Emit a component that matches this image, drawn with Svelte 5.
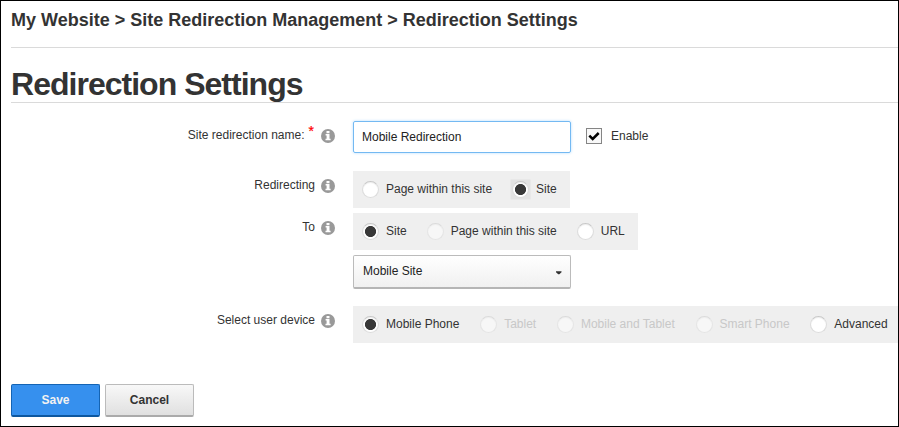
<script>
  const rows = {
    from: [
      { label: 'Page within this site' },
      { label: 'Site', checked: true, focused: true }
    ],
    to: [
      { label: 'Site', checked: true },
      { label: 'Page within this site', faded: true },
      { label: 'URL' }
    ],
    device: [
      { label: 'Mobile Phone', checked: true },
      { label: 'Tablet', disabled: true },
      { label: 'Mobile and Tablet', disabled: true },
      { label: 'Smart Phone', disabled: true },
      { label: 'Advanced' }
    ]
  };
</script>

{#snippet info()}
  <svg class="info" width="14" height="14" viewBox="0 0 14 14" aria-hidden="true">
    <circle cx="7" cy="7" r="7" fill="#999" />
    <path d="M5.5 2h3v2.2h-3zM4.6 5h3.9v4.8h1.1v1.5H4.5V9.8h1.1V6.5h-1z" fill="#fff" />
  </svg>
{/snippet}

{#snippet options(list)}
  <div class="options">
    {#each list as item}
      <span class="option" class:disabled={item.disabled}>
        <span class="holder" class:focused={item.focused}>
          <span class="radio" class:checked={item.checked} class:faded={item.faded || item.disabled}></span>
        </span>
        <span class="text">{item.label}</span>
      </span>
    {/each}
  </div>
{/snippet}

<main>
  <div class="crumbs">My Website &gt; Site Redirection Management &gt; Redirection Settings</div>
  <h1>Redirection Settings</h1>

  <div class="row name">
    <div class="label">Site redirection name: <span class="star">*</span>{@render info()}</div>
    <div class="field">Mobile Redirection</div>
    <span class="check">
      <svg width="16" height="16" viewBox="0 0 16 16" aria-hidden="true">
        <path d="M3.3 7.6L6.7 11L12.7 5" fill="none" stroke="#000" stroke-width="2.5" />
      </svg>
    </span>
    <span class="enable">Enable</span>
  </div>

  <div class="row from">
    <div class="label">Redirecting{@render info()}</div>
    {@render options(rows.from)}
  </div>

  <div class="row to">
    <div class="label">To{@render info()}</div>
    <div>
      {@render options(rows.to)}
      <div class="select">
        <span>Mobile Site</span>
        <svg width="6" height="4" viewBox="0 0 6 4" aria-hidden="true"><path d="M0 .3h5.5v1L3.4 3.3H2.2L0 1.3z" fill="#333" /></svg>
      </div>
    </div>
  </div>

  <div class="row device">
    <div class="label">Select user device{@render info()}</div>
    {@render options(rows.device)}
  </div>

  <div class="actions">
    <button class="save">Save</button>
    <button class="cancel">Cancel</button>
  </div>
</main>

<style>
  :global(body) { margin: 0; background: #fff; }
  main {
    box-sizing: border-box;
    width: 899px;
    height: 427px;
    border: 1px solid #000;
    padding-left: 10px;
    overflow: hidden;
    font: 12px/16px "Liberation Sans", Arial, sans-serif;
    color: #333;
    white-space: nowrap;
  }
  .crumbs {
    box-sizing: border-box;
    height: 47px;
    border-bottom: 1px solid #dadada;
    font-size: 18px;
    line-height: 38px;
    font-weight: bold;
  }
  h1 {
    box-sizing: border-box;
    margin: 0;
    height: 55px;
    border-bottom: 1px solid #dadada;
    font-size: 32px;
    line-height: 36px;
    padding-top: 18px;
    letter-spacing: -0.98px;
  }
  .row { display: flex; align-items: flex-start; }
  .row > :global(*) { flex-shrink: 0; }
  .name { margin-top: 18px; height: 50px; }
  .from { height: 42px; }
  .to { height: 93px; }
  .device { height: 78px; }
  .label {
    display: flex;
    justify-content: flex-end;
    width: 324px;
    margin-right: 18px;
    padding-top: 6px;
  }
  .info { margin: 2px 0 0 6px; }
  .star { color: #f00; margin: -4px 1px 0 4px; font-size: 14px; -webkit-text-stroke: 0.2px #f00; }
  .field {
    box-sizing: border-box;
    width: 218px;
    height: 32px;
    border: 1px solid #74b9f2;
    border-radius: 2px;
    padding: 8px;
    line-height: 14px;
    box-shadow: 0 0 3px #b4dcff;
    color: #222;
  }
  .check {
    box-sizing: border-box;
    width: 16px;
    height: 16px;
    margin: 7px 9px 0 15px;
    border: 1px solid #858585;
    background: #f8f8f8;
    display: flex;
  }
  .check svg { margin: -1px; }
  .enable { margin-top: 7px; }
  .options {
    box-sizing: border-box;
    display: inline-flex;
    align-items: center;
    gap: 20px;
    height: 37px;
    padding: 0 13px 0 9px;
    background: #efefef;
    vertical-align: top;
  }
  .device .options { gap: 20.75px; }
  .option { display: flex; align-items: center; gap: 7px; }
  .option .text { position: relative; top: -1px; }
  .disabled .text { color: #c8c8c8; }
  .holder { display: flex; }
  .focused { background: #e2e2e2; box-shadow: 0 0 0 1.5px #e2e2e2; }
  .radio {
    box-sizing: border-box;
    width: 17px;
    height: 17px;
    border-radius: 50%;
    border: 1px solid #dcdcdc;
    border-top-color: #c8c8c8;
    background: #fff;
    box-shadow: inset 0 1px 1px #eee;
  }
  .checked { background: radial-gradient(circle, #383838 5.2px, #fff 5.9px); }
  .faded { opacity: .5; }
  .select {
    box-sizing: border-box;
    display: flex;
    justify-content: space-between;
    align-items: center;
    width: 218px;
    height: 34px;
    margin-top: 5px;
    padding: 0 8px 2px 9px;
    border: 1px solid #bbb;
    border-bottom: 2px solid #b5b5b5;
    border-radius: 2px;
    background: linear-gradient(#fff, #f0f0f0);
    color: #222;
  }
  .select svg { margin-top: 4px; }
  .actions { display: flex; gap: 5px; }
  button {
    box-sizing: border-box;
    width: 89px;
    height: 33px;
    border: 1px solid #bbb;
    border-bottom: 2px solid #aaa;
    border-radius: 2px;
    padding: 0 0 1px;
    background: linear-gradient(#f8f8f8, #e0e0e0);
    font: bold 12px/16px "Liberation Sans", Arial, sans-serif;
    color: #333;
  }
  .save {
    background: #3690ee;
    border-color: #1464b4;
    border-bottom-color: #0d579f;
    color: #f2f2f2;
  }
</style>
